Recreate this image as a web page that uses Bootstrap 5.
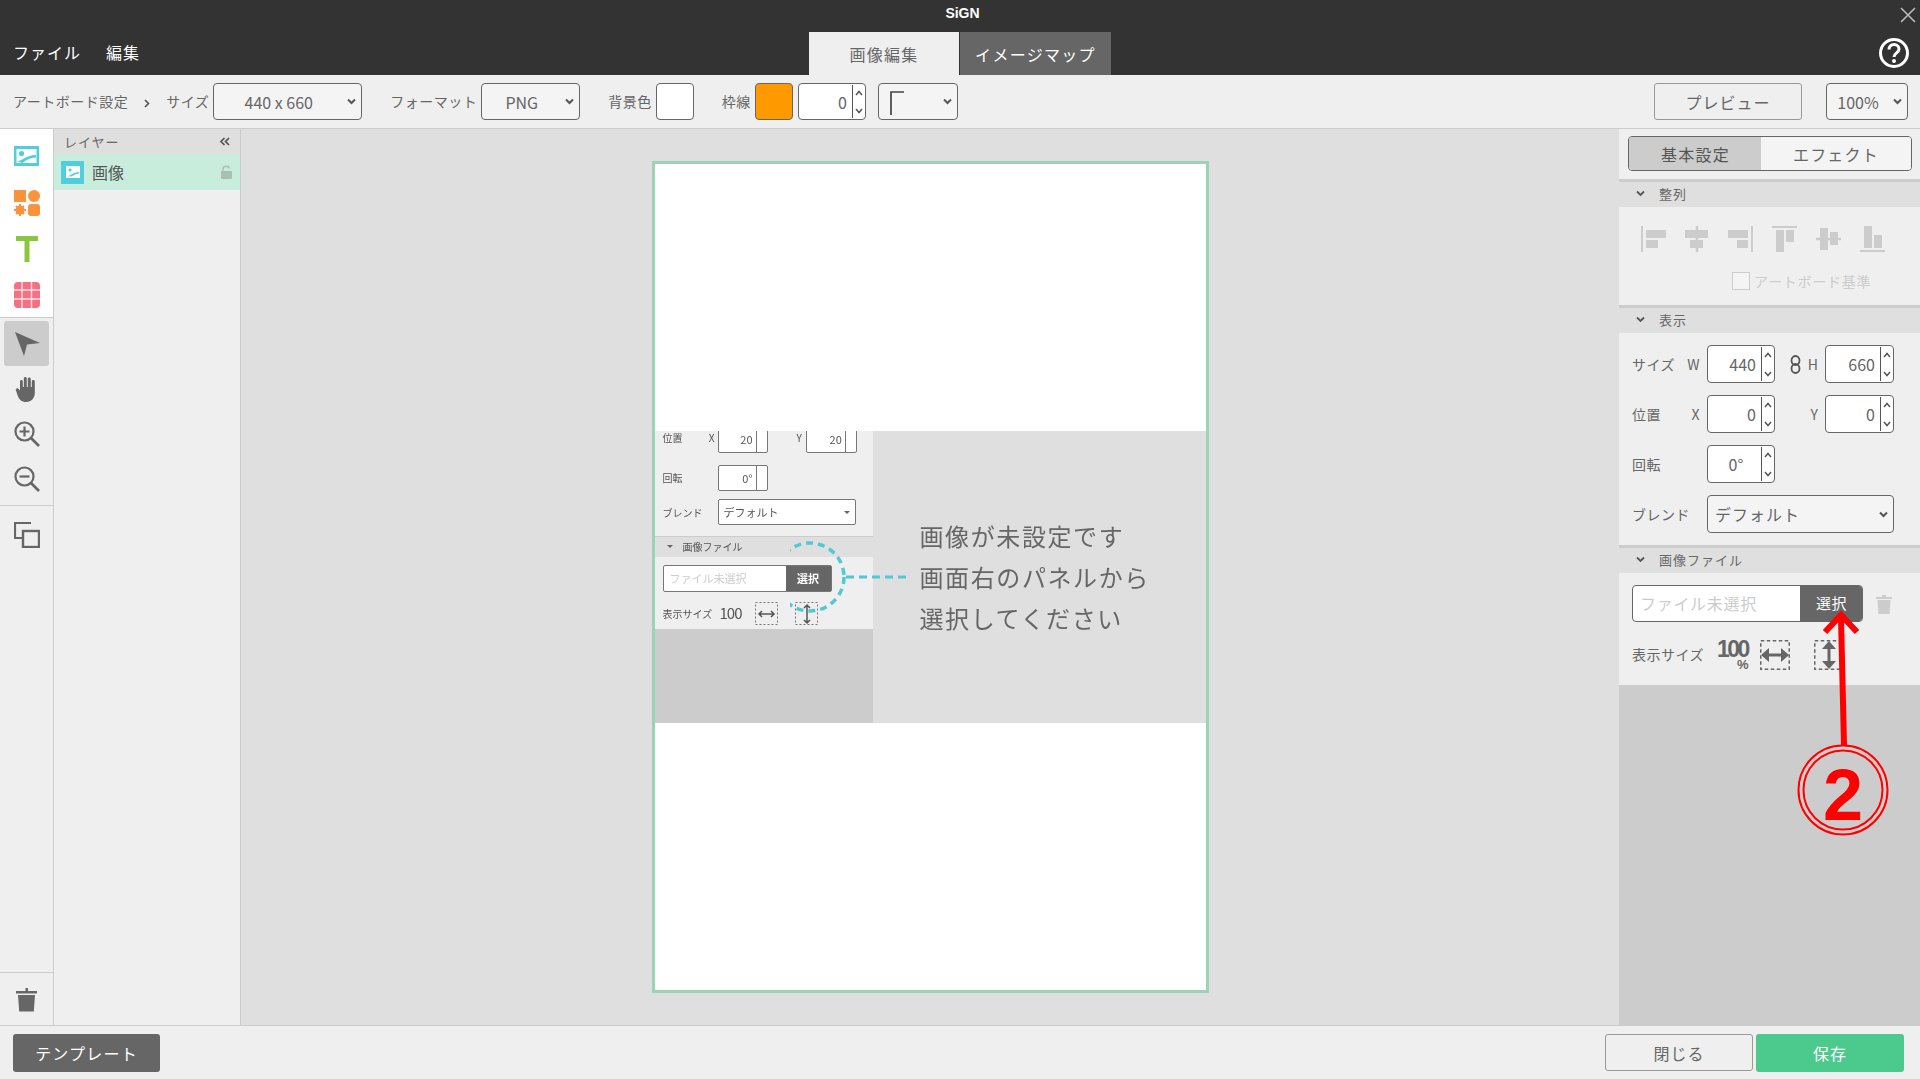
<!DOCTYPE html>
<html lang="ja">
<head>
<meta charset="utf-8">
<title>SiGN</title>
<link href="https://cdn.jsdelivr.net/npm/bootstrap@5.3.0/dist/css/bootstrap.min.css" rel="stylesheet">
<style>
:root{--sg-t:#666;--sg-bg:#efefef;--sg-mid:#dfdfdf;--sg-line:#ccc;--sg-cy:#4fcfdc}
html,body{height:100%}
body{font-family:"Noto Sans CJK JP","Noto Sans",sans-serif;color:var(--sg-t);background:var(--sg-bg);font-size:14px;overflow:hidden;position:relative}
.sg-top{background:#333;height:75px;color:#fff;flex:none}
.sg-titlerow{height:32px;position:relative}
.sg-title{font-size:14px;font-weight:700;letter-spacing:0;line-height:26px;margin-left:5px;font-family:"Liberation Sans",sans-serif}
.sg-close{position:absolute;right:3px;top:6px}
.sg-menurow{height:43px}
.sg-menu{width:809px;padding-left:13px;gap:25px;font-size:16px;letter-spacing:1px;padding-top:8px}
.sg-tab{height:43px;font-size:16px;letter-spacing:1.3px;display:flex;align-items:center;justify-content:center}
.sg-tab-on{width:151px;background:var(--sg-bg);color:var(--sg-t);border-right:1px solid #333}
.sg-tab-off{width:151px;background:#666;color:#fff}
.sg-help{margin-left:auto;margin-right:10px;margin-top:5px}
.sg-bar{height:54px;flex:none;background:var(--sg-bg);border-bottom:1px solid var(--sg-line);padding:8px 12px 0 13px}
.sg-lbl{letter-spacing:.5px;white-space:nowrap;line-height:37px}
.sg-sel.form-select{height:37px;border:1px solid #666;border-radius:4px;background-color:#f4f4f4;color:var(--sg-t);font-size:16px;padding:0 18px 0 0;text-align:center;background-position:right 5px center;background-size:9px 7px;background-image:url("data:image/svg+xml,%3Csvg xmlns='http://www.w3.org/2000/svg' viewBox='0 0 9 7'%3E%3Cpath d='M1 1.5l3.5 3.5 3.5-3.5' fill='none' stroke='%23555' stroke-width='2'/%3E%3C/svg%3E");box-shadow:none}
.sg-w149{width:149px}.sg-w99{width:99px}.sg-w80{width:80px}.sg-w82{width:82px;background-color:#fff}
.sg-swatch{width:38px;height:37px;border:1px solid #666;border-radius:4px;background:#fff}
.sg-orange{background:#f90}
.sg-spin{display:flex;height:38px;border:1px solid #666;border-radius:4px;background:#fff;color:var(--sg-t);font-size:16px}
.sg-spinval{flex:1;text-align:right;padding-right:5px;line-height:36px}
.sg-spinbtn{width:13px;border-left:1px solid #555;margin:1px 0;display:flex;flex-direction:column;align-items:center;justify-content:space-between;padding:5px 0 4px}
.sg-h37{height:37px}
.sg-w68{width:68px}.sg-w69{width:69px}
.sg-btnline.btn{border:1px solid #999;border-radius:3px;background:var(--sg-bg);color:var(--sg-t);font-size:16px;letter-spacing:1px;padding:0;height:37px;width:148px}
.sg-main{flex:1;min-height:0}
.sg-tools{width:54px;flex:none;border-right:1px solid var(--sg-line)}
.sg-toolwhite{background:#fff;height:189px;border-bottom:1px solid var(--sg-line);padding-top:17px;gap:20px}
.sg-toolgrey{height:188px;border-bottom:1px solid var(--sg-line);padding:3px 4px 0}
.sg-toolbtn{width:45px;height:45px;border-radius:3px;display:flex;align-items:center;justify-content:center;margin-bottom:0}
.sg-toolbtn.sg-sel-on{background:var(--sg-line)}
.sg-toolgap{height:0}
.sg-trashcell{height:53px;border-top:1px solid var(--sg-line)}
.sg-layers{width:187px;flex:none;border-right:1px solid var(--sg-line);background:var(--sg-bg)}
.sg-layhead{height:25px;background:var(--sg-mid);padding:0 10px;font-size:13px;letter-spacing:1px;line-height:25px}
.sg-layrow{height:36px;background:#c8eddd;padding:0 8px 0 7px;font-size:16px;color:#555}
.sg-tile{width:23px;height:23px;background:var(--sg-cy);display:flex;align-items:center;justify-content:center;margin-right:8px}
.sg-center{flex:1;background:var(--sg-mid)}
.sg-board{width:557px;height:832px;border:3px solid #9cd3b8;background:#fff;margin-top:-1px;filter:blur(.25px)}
.sg-img{height:292px;width:100%}
.sg-mini{width:218px;background:#ccc;flex:none;position:relative;font-size:10px;color:#555;overflow:hidden}
.sg-minipanel{height:206px;background:var(--sg-bg)}
.sg-mrow{display:flex;align-items:center;padding-left:8px}
.sg-mlab{width:55px;display:flex;justify-content:space-between;padding-right:3px}
.sg-mbox{border:1px solid #777;border-radius:2px;background:#fff;text-align:right;font-size:11px;padding-right:14px;position:relative}
.sg-mbox::after{content:"";position:absolute;right:10px;top:0;bottom:0;border-left:1px solid #777}
.sg-mhead{height:21px;background:var(--sg-mid);border-top:1px solid #ccc;padding-left:28px;line-height:20px;position:relative;font-size:10px;margin-top:10px}
.sg-mhead::before{content:"";position:absolute;left:12px;top:8px;border:3px solid transparent;border-top-color:#666}
.sg-msel{width:138px;height:26px;border:1px solid #777;border-radius:2px;background:#fff;padding-left:5px;line-height:24px;position:relative;font-size:11px}
.sg-msel::after{content:"";position:absolute;right:5px;top:11px;border:3px solid transparent;border-top-color:#666}
.sg-mfile{width:169px;height:27px;border:1px solid #777;border-radius:2px;background:#fff;margin-left:8px;color:#ccc;line-height:25px;padding-left:6px;font-size:11px;position:relative}
.sg-mfilebtn{position:absolute;right:0;top:0;bottom:0;width:45px;background:#666;color:#fff;text-align:center;font-weight:700;font-size:11px}
.sg-msg{flex:1;background:var(--sg-mid);padding-left:47px;font-size:24px;letter-spacing:1.6px;line-height:41px;color:#666;display:flex;flex-direction:column;justify-content:center;margin-bottom:0}
.sg-dash{position:absolute;left:135px;top:107px}
.sg-right{width:301px;flex:none;background:#ccc;display:flex;flex-direction:column}
.sg-rtop{background:var(--sg-bg);padding:7px 7px 8px 9px}
.sg-seg.btn-group{width:284px;height:35px;border:1px solid #666;border-radius:4px;overflow:hidden;background:#f4f4f4}
.sg-seg .btn{border:0;border-radius:0;font-size:16px;letter-spacing:1.2px;padding:0;color:var(--sg-t);background:#f4f4f4}
.sg-seg .btn.sg-segon{background:#ccc;color:#555}
.sg-shead{height:28px;border-top:3px solid var(--sg-line);background:var(--sg-mid);font-size:13px;letter-spacing:1px;padding-left:17px;line-height:24px;gap:14px;color:#666}
.sg-sec{background:var(--sg-bg)}
.sg-aligns{padding:19px 0 0 22px;gap:19px;height:45px}
.sg-artb{margin-top:20px;padding-left:113px;height:18px;color:#ccc;font-size:14px;letter-spacing:.75px;line-height:18px;margin-bottom:15px;gap:4px}
.sg-cbox{width:18px;height:18px;border:1px solid #ccc;background:#f4f4f4;flex:none}
.sg-frows{padding:12px 0 12px 13px;gap:12px}
.sg-rlab{width:75px;letter-spacing:.5px;padding-right:7px;flex:none;color:#666}
.sg-rlab2{width:50px;padding-right:7px;flex:none;color:#666}
.sg-blend.form-select{width:187px;height:38px;text-align:left;padding-left:7px;letter-spacing:1px}
.sg-filerow{padding:12px 0 0 13px}
.sg-fileinp{width:231px;height:37px;border:1px solid #666;border-radius:4px;background:#fff;overflow:hidden;color:#ccc;font-size:16px;letter-spacing:.7px;padding-left:7px;line-height:35px;position:relative}
.sg-filebtn.btn{position:absolute;right:-1px;top:-1px;bottom:-1px;width:63px;background:#666;color:#fff;border:0;border-radius:0;font-size:15px;padding:0;letter-spacing:.5px}
.sg-dsize{padding:17px 0 15px 13px;height:63px}
.sg-pct{width:38px;height:30px;position:relative;margin-left:8px;font-family:"Liberation Sans",sans-serif;font-weight:700;color:#666;line-height:1}
.sg-pct b{position:absolute;left:-1px;top:-2px;font-size:23px;letter-spacing:-2.6px}
.sg-pct i{position:absolute;left:19px;top:18px;font-size:13px;font-style:normal}
.sg-fill{flex:1;background:#ccc}
.sg-bottom{height:54px;flex:none;border-top:1px solid var(--sg-line);background:var(--sg-bg);padding:8px 16px 0 13px}
.sg-btndark.btn{width:147px;height:38px;background:#666;color:#fff;border:0;border-radius:3px;font-size:16px;letter-spacing:1.2px;padding:0}
.sg-btnsave.btn{width:148px;height:38px;background:#4cc98c;color:#fff;border:0;border-radius:3px;font-size:16px;letter-spacing:1px;padding:0;margin-left:3px}
.sg-h38{height:38px}
.sg-anno{position:absolute;left:1780px;top:600px;pointer-events:none}
.sg-ml{margin-left:5px}
</style>
</head>
<body>
<div class="d-flex flex-column vh-100">

  <header class="sg-top">
    <div class="sg-titlerow text-center">
      <span class="sg-title">SiGN</span>
      <svg class="sg-close" width="18" height="18" viewBox="0 0 18 18"><path d="M2 2l14 14M16 2L2 16" stroke="#bbb" stroke-width="1.6" fill="none"/></svg>
    </div>
    <div class="sg-menurow d-flex">
      <div class="sg-menu d-flex"><span>ファイル</span><span>編集</span></div>
      <div class="sg-tab sg-tab-on">画像編集</div>
      <div class="sg-tab sg-tab-off">イメージマップ</div>
      <svg class="sg-help" width="32" height="32" viewBox="0 0 32 32"><circle cx="16" cy="16" r="13.5" fill="none" stroke="#fff" stroke-width="3"/><path d="M11 12.5c0-3 2.2-5 5-5s5 2 5 4.600c0 3.800-5 3.800-5 8" fill="none" stroke="#fff" stroke-width="3"/><circle cx="16" cy="24" r="2" fill="#fff"/></svg>
    </div>
  </header>

  <div class="sg-bar d-flex">
    <span class="sg-lbl">アートボード設定</span>
    <svg class="ms-3 me-3 mt-3" width="6" height="9" viewBox="0 0 6 9"><path d="M1 1l3.500 3.500L1 8" fill="none" stroke="#555" stroke-width="1.700"/></svg>
    <span class="sg-lbl me-1">サイズ</span>
    <select class="form-select sg-sel sg-w149"><option>440 x 660</option></select>
    <span class="sg-lbl ms-4 me-1 ps-1">フォーマット</span>
    <select class="form-select sg-sel sg-w99"><option>PNG</option></select>
    <span class="sg-lbl ms-4 me-1 ps-1">背景色</span>
    <div class="sg-swatch"></div>
    <span class="sg-lbl ms-4 me-1 ps-1">枠線</span>
    <div class="sg-swatch sg-orange"></div>
    <div class="sg-spin sg-h37 sg-w68 sg-ml">
      <span class="sg-spinval">0</span>
      <span class="sg-spinbtn"><svg width="8" height="6" viewBox="0 0 8 6"><path d="M1 5l3-3.500L7 5" fill="none" stroke="#555" stroke-width="1.500"/></svg><svg width="8" height="6" viewBox="0 0 8 6"><path d="M1 1l3 3.500L7 1" fill="none" stroke="#555" stroke-width="1.500"/></svg></span>
    </div>
    <div class="position-relative ms-2 ps-1 me-auto">
      <select class="form-select sg-sel sg-w80" aria-label="角"><option></option></select>
      <svg class="position-absolute top-0 start-0 mt-2 ms-3" width="14" height="24" viewBox="0 0 14 24"><path d="M1 24V1h13" fill="none" stroke="#444" stroke-width="1.700"/></svg>
    </div>
    <button class="btn sg-btnline" type="button">プレビュー</button>
    <select class="form-select sg-sel sg-w82 ms-4 ps-0"><option>100%</option></select>
  </div>

  <main class="sg-main d-flex">
    <nav class="sg-tools d-flex flex-column">
      <div class="sg-toolwhite d-flex flex-column align-items-center">
        <svg width="25" height="20" viewBox="0 0 25 20"><rect width="25" height="20" fill="#4fcfdc"/><rect x="2.500" y="3" width="20" height="14" fill="#fff"/><circle cx="7.500" cy="7.500" r="2.600" fill="#4fcfdc"/><path d="M3 15.500c5-.5 9-6.500 19-6.500v2.500c-7 0-11 4-13.500 5.500z" fill="#4fcfdc"/></svg>
        <svg class="mt-1" width="26" height="26" viewBox="0 0 26 26"><rect width="12" height="12" fill="#fb923c"/><circle cx="20" cy="6" r="6" fill="#fb923c"/><circle cx="6" cy="20" r="4.500" fill="#fb923c"/><path d="M6 14v12M0 20h12M2 16l8 8M10 16l-8 8" stroke="#fb923c" stroke-width="2"/><rect x="14" y="14" width="12" height="12" rx="3" fill="#fb923c"/></svg>
        <svg width="24" height="26" viewBox="0 0 24 26"><path d="M1 2.500h22M12 2.500V26" fill="none" stroke="#8cc63f" stroke-width="5"/></svg>
        <svg width="26" height="26" viewBox="0 0 26 26"><rect width="26" height="26" rx="4" fill="#f4727f"/><path d="M8 0v26M17.500 0v26M0 8h26M0 17h26" stroke="#fde" stroke-width="1.400"/></svg>
      </div>
      <div class="sg-toolgrey d-flex flex-column">
        <div class="sg-toolbtn sg-sel-on"><svg width="26" height="26" viewBox="0 0 26 26"><path d="M1 1l25 11-13 1.500L10 25z" fill="#666"/></svg></div>
        <div class="sg-toolbtn"><svg width="24" height="26" viewBox="0 0 24 26"><path d="M5 5.500c0-2 2.800-2 2.800 0V11h1V2.500c0-2 3-2 3 0V11h1V3c0-2 3-2 3 0v8h1V5.500c0-2 3-2 3 0V17c0 5-3.500 9-8.500 9-5 0-6.800-2.500-8.300-5.500L1 14.500c-1-2 1.500-3.300 2.800-1.500L5 14.500z" fill="#666"/></svg></div>
        <div class="sg-toolbtn"><svg width="26" height="26" viewBox="0 0 26 26"><circle cx="10.500" cy="10.500" r="9" fill="none" stroke="#666" stroke-width="2.200"/><path d="M17 17l8 8" stroke="#666" stroke-width="2.600"/><path d="M5.500 10.500h10M10.500 5.500v10" stroke="#666" stroke-width="2.200"/></svg></div>
        <div class="sg-toolbtn"><svg width="26" height="26" viewBox="0 0 26 26"><circle cx="10.500" cy="10.500" r="9" fill="none" stroke="#666" stroke-width="2.200"/><path d="M17 17l8 8" stroke="#666" stroke-width="2.600"/><path d="M5.500 10.500h10" stroke="#666" stroke-width="2.200"/></svg></div>
      </div>
      <div class="d-flex justify-content-center pt-3 flex-grow-1"><svg class="mt-0" width="26" height="26" viewBox="0 0 26 26"><path d="M17 1H1v15h7" fill="none" stroke="#666" stroke-width="2.200" transform="translate(0 0)"/><path d="M16 1v7M1 16h8" fill="none" stroke="#666" stroke-width="0"/><rect x="9" y="9" width="16" height="16" fill="none" stroke="#666" stroke-width="2.400"/></svg></div>
      <div class="sg-trashcell d-flex justify-content-center align-items-center"><svg width="22" height="26" viewBox="0 0 22 26"><path d="M0 5h21V7.500H0zM9.500 2h2.500v3H9.500z" fill="#666"/><path d="M2 9h17l-1.200 16.500H3.200z" fill="#666"/></svg></div>
    </nav>

    <aside class="sg-layers">
      <div class="sg-layhead d-flex justify-content-between align-items-center"><span>レイヤー</span><svg width="10" height="9" viewBox="0 0 10 9"><path d="M4.500 1L1 4.500 4.500 8M9 1L5.500 4.500 9 8" fill="none" stroke="#555" stroke-width="1.700"/></svg></div>
      <div class="sg-layrow d-flex align-items-center">
        <span class="sg-tile"><svg width="14" height="12" viewBox="0 0 14 12"><rect width="14" height="12" fill="#fff"/><circle cx="4" cy="4" r="1.500" fill="#4fcfdc"/><path d="M1 10c4 0 6-4 12-4v1.500c-4 0-6 3-8 3z" fill="#4fcfdc"/></svg></span>
        <span class="flex-grow-1">画像</span>
        <svg width="11" height="14" viewBox="0 0 11 14"><rect y="6" width="11" height="8" rx="1" fill="#a9bfb4"/><path d="M2 6V3.500C2 .5 8.500 .5 8.500 3.500" fill="none" stroke="#a9bfb4" stroke-width="1.400"/></svg>
      </div>
    </aside>

    <section class="sg-center d-flex justify-content-center align-items-center">
      <div class="sg-board d-flex align-items-center">
        <div class="sg-img d-flex">
          <div class="sg-mini">
            <div class="sg-minipanel">
              <div class="sg-mrow" style="margin-top:-8px;height:30px">
                <span class="sg-mlab"><span>位置</span><span>X</span></span>
                <span class="sg-mbox" style="width:50px;height:30px;line-height:30px;margin-right:29px">20</span>
                <span class="pe-1">Y</span>
                <span class="sg-mbox" style="width:51px;height:30px;line-height:30px">20</span>
              </div>
              <div class="sg-mrow mt-2 pt-1" style="height:30px">
                <span class="sg-mlab">回転</span>
                <span class="sg-mbox" style="width:50px;height:26px;line-height:24px">0°</span>
              </div>
              <div class="sg-mrow mt-2" style="height:27px">
                <span class="sg-mlab">ブレンド</span>
                <span class="sg-msel">デフォルト</span>
              </div>
              <div class="sg-mhead">画像ファイル</div>
              <div class="sg-mfile mt-2">ファイル未選択<span class="sg-mfilebtn">選択</span></div>
              <div class="sg-mrow" style="height:40px;padding-top:4px">
                <span style="width:57px">表示サイズ</span>
                <span style="font-size:15px;width:35px;letter-spacing:-1px">100</span>
                <svg width="24" height="24" viewBox="0 0 24 24" class="me-3"><rect x=".5" y=".5" width="22" height="22" fill="none" stroke="#777" stroke-dasharray="2 2"/><path d="M4 12h15M7 9l-3 3 3 3M16 9l3 3-3 3" fill="none" stroke="#555" stroke-width="1.500"/></svg>
                <svg width="24" height="24" viewBox="0 0 24 24"><rect x=".5" y=".5" width="22" height="22" fill="none" stroke="#777" stroke-dasharray="2 2"/><path d="M12 3v18M9 6l3-3 3 3M9 18l3 3 3-3" fill="none" stroke="#555" stroke-width="1.500"/></svg>
              </div>
            </div>
            <svg class="sg-dash" width="83" height="76" viewBox="0 0 83 76"><circle cx="20" cy="39" r="34" transform="translate(0 0)" fill="none" stroke="#4fc9d6" stroke-width="3.500" stroke-dasharray="7 5"/></svg>
          </div>
          <div class="sg-msg position-relative">
            <span>画像が未設定です</span><span>画面右のパネルから</span><span>選択してください</span>
            <svg class="position-absolute top-50 start-0" style="margin-top:-2px;margin-left:-27px" width="60" height="4" viewBox="0 0 60 4"><path d="M0 2h60" stroke="#4fc9d6" stroke-width="3" stroke-dasharray="8 5"/></svg>
          </div>
        </div>
      </div>
    </section>

    <aside class="sg-right">
      <div class="sg-rtop">
        <div class="btn-group sg-seg"><button class="btn sg-segon" type="button">基本設定</button><button class="btn" type="button">エフェクト</button></div>
      </div>

      <div class="sg-shead d-flex"><svg class="mt-2" width="9" height="7" viewBox="0 0 9 7"><path d="M1 1.500l3.500 3.500L8 1.500" fill="none" stroke="#555" stroke-width="1.800"/></svg><span>整列</span></div>
      <div class="sg-sec">
        <div class="sg-aligns d-flex">
          <svg width="25" height="26" viewBox="0 0 25 26"><path d="M1 0v26" stroke="#ccc" stroke-width="2"/><path d="M5 4h20v8H5zM5 14h12v8H5z" fill="#ccc"/></svg>
          <svg width="24" height="26" viewBox="0 0 24 26"><path d="M12 0v26" stroke="#ccc" stroke-width="2.500"/><path d="M0 4h23v8H0zM5 14h13v8H5z" fill="#ccc"/></svg>
          <svg width="25" height="26" viewBox="0 0 25 26"><path d="M24 0v26" stroke="#ccc" stroke-width="2"/><path d="M0 4h20v8H0zM9 14h11v8H9z" fill="#ccc"/></svg>
          <svg width="25" height="26" viewBox="0 0 25 26"><path d="M0 1h25" stroke="#ccc" stroke-width="2"/><path d="M4 4h8v22H4zM14 4h8v12h-8z" fill="#ccc"/></svg>
          <svg width="25" height="26" viewBox="0 0 25 26"><path d="M0 13h25" stroke="#ccc" stroke-width="2.500"/><path d="M4 2h8v22H4zM14 6h8v13h-8z" fill="#ccc"/></svg>
          <svg width="25" height="26" viewBox="0 0 25 26"><path d="M0 25h25" stroke="#ccc" stroke-width="2"/><path d="M4 0h8v22H4zM14 9h8v13h-8z" fill="#ccc"/></svg>
        </div>
        <div class="sg-artb d-flex"><span class="sg-cbox"></span><span>アートボード基準</span></div>
      </div>

      <div class="sg-shead d-flex"><svg class="mt-2" width="9" height="7" viewBox="0 0 9 7"><path d="M1 1.500l3.500 3.500L8 1.500" fill="none" stroke="#555" stroke-width="1.800"/></svg><span>表示</span></div>
      <div class="sg-sec sg-frows d-flex flex-column">
        <div class="d-flex align-items-center">
          <span class="sg-rlab d-flex justify-content-between"><span>サイズ</span><span>W</span></span>
          <div class="sg-spin sg-w68"><span class="sg-spinval">440</span><span class="sg-spinbtn"><svg width="8" height="6" viewBox="0 0 8 6"><path d="M1 5l3-3.500L7 5" fill="none" stroke="#555" stroke-width="1.500"/></svg><svg width="8" height="6" viewBox="0 0 8 6"><path d="M1 1l3 3.500L7 1" fill="none" stroke="#555" stroke-width="1.500"/></svg></span></div>
          <span class="sg-rlab2 d-flex justify-content-between align-items-center"><svg class="ms-2 ps-1" width="21" height="19" viewBox="0 0 11 19"><ellipse cx="5.500" cy="5.500" rx="4" ry="4.500" fill="none" stroke="#555" stroke-width="1.800"/><ellipse cx="5.500" cy="13.500" rx="4" ry="4.500" fill="none" stroke="#555" stroke-width="1.800"/></svg><span>H</span></span>
          <div class="sg-spin sg-w69"><span class="sg-spinval">660</span><span class="sg-spinbtn"><svg width="8" height="6" viewBox="0 0 8 6"><path d="M1 5l3-3.500L7 5" fill="none" stroke="#555" stroke-width="1.500"/></svg><svg width="8" height="6" viewBox="0 0 8 6"><path d="M1 1l3 3.500L7 1" fill="none" stroke="#555" stroke-width="1.500"/></svg></span></div>
        </div>
        <div class="d-flex align-items-center">
          <span class="sg-rlab d-flex justify-content-between"><span>位置</span><span>X</span></span>
          <div class="sg-spin sg-w68"><span class="sg-spinval">0</span><span class="sg-spinbtn"><svg width="8" height="6" viewBox="0 0 8 6"><path d="M1 5l3-3.500L7 5" fill="none" stroke="#555" stroke-width="1.500"/></svg><svg width="8" height="6" viewBox="0 0 8 6"><path d="M1 1l3 3.500L7 1" fill="none" stroke="#555" stroke-width="1.500"/></svg></span></div>
          <span class="sg-rlab2 text-end">Y</span>
          <div class="sg-spin sg-w69"><span class="sg-spinval">0</span><span class="sg-spinbtn"><svg width="8" height="6" viewBox="0 0 8 6"><path d="M1 5l3-3.500L7 5" fill="none" stroke="#555" stroke-width="1.500"/></svg><svg width="8" height="6" viewBox="0 0 8 6"><path d="M1 1l3 3.500L7 1" fill="none" stroke="#555" stroke-width="1.500"/></svg></span></div>
        </div>
        <div class="d-flex align-items-center">
          <span class="sg-rlab">回転</span>
          <div class="sg-spin sg-w68"><span class="sg-spinval text-center ps-2">0°</span><span class="sg-spinbtn"><svg width="8" height="6" viewBox="0 0 8 6"><path d="M1 5l3-3.500L7 5" fill="none" stroke="#555" stroke-width="1.500"/></svg><svg width="8" height="6" viewBox="0 0 8 6"><path d="M1 1l3 3.500L7 1" fill="none" stroke="#555" stroke-width="1.500"/></svg></span></div>
        </div>
        <div class="d-flex align-items-center">
          <span class="sg-rlab">ブレンド</span>
          <select class="form-select sg-sel sg-blend"><option>デフォルト</option></select>
        </div>
      </div>

      <div class="sg-shead d-flex"><svg class="mt-2" width="9" height="7" viewBox="0 0 9 7"><path d="M1 1.500l3.500 3.500L8 1.500" fill="none" stroke="#555" stroke-width="1.800"/></svg><span>画像ファイル</span></div>
      <div class="sg-sec">
        <div class="sg-filerow d-flex align-items-center">
          <div class="sg-fileinp">ファイル未選択<button class="btn sg-filebtn" type="button">選択</button></div>
          <svg class="ms-2 mt-0 ps-1" width="22" height="20" viewBox="0 0 16 20"><path d="M0 3h16v2H0zM6 1h4v2H6z" fill="#ccc"/><path d="M1.500 6h13l-1 14h-11z" fill="#ccc"/></svg>
        </div>
        <div class="sg-dsize d-flex align-items-center">
          <span class="sg-rlab flex-shrink-0" style="width:78px;padding-right:0">表示サイズ</span>
          <div class="sg-pct"><b>100</b><i>%</i></div>
          <svg width="30" height="30" viewBox="0 0 30 30" class="ms-1 me-4"><rect x=".75" y=".75" width="28.500" height="28.500" fill="none" stroke="#666" stroke-width="1.500" stroke-dasharray="3.500 2.500"/><path d="M6 15h18" stroke="#666" stroke-width="3"/><path d="M1 15l8-7v14zM29 15l-8-7v14z" fill="#666"/></svg>
          <svg width="30" height="30" viewBox="0 0 30 30"><rect x=".75" y=".75" width="28.500" height="28.500" fill="none" stroke="#666" stroke-width="1.500" stroke-dasharray="3.500 2.500"/><path d="M15 6v18" stroke="#666" stroke-width="3"/><path d="M15 1l-7 8h14zM15 29l-7-8h14z" fill="#666"/></svg>
        </div>
      </div>
      <div class="sg-fill"></div>
    </aside>
  </main>

  <footer class="sg-bottom d-flex">
    <button class="btn sg-btndark me-auto" type="button">テンプレート</button>
    <button class="btn sg-btnline" type="button">閉じる</button>
    <button class="btn sg-btnsave" type="button">保存</button>
  </footer>
</div>

<svg class="sg-anno" width="130" height="250" viewBox="1780 600 130 250">
  <path d="M1841 618L1844 745" stroke="#f00" stroke-width="6" fill="none"/>
  <path d="M1825 632l16-17 16 17" stroke="#f00" stroke-width="6" fill="none"/>
  <circle cx="1843" cy="790" r="44.500" fill="none" stroke="#f00" stroke-width="2"/>
  <circle cx="1843" cy="790" r="39.500" fill="none" stroke="#f00" stroke-width="2"/>
  <text x="1843" y="820" text-anchor="middle" font-family="Liberation Sans, sans-serif" font-weight="700" font-size="72" fill="#f00">2</text>
</svg>
<script src="https://cdn.jsdelivr.net/npm/bootstrap@5.3.0/dist/js/bootstrap.bundle.min.js"></script>
</body>
</html>
